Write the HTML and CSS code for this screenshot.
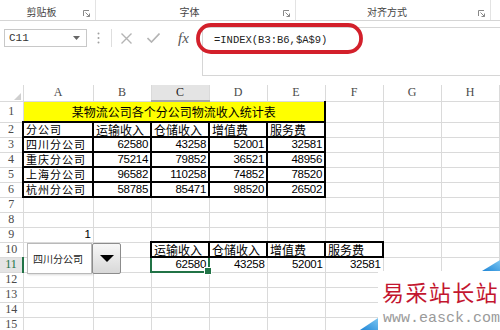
FILE: index.html
```html
<!DOCTYPE html>
<html>
  <head>
    <meta charset="utf-8">
    <title>INDEX 函数 - 物流收入统计</title>
    <link rel="stylesheet" href="styles.css">
  </head>
  <body>
    <!-- 功能区分组 -->
    <div class="ribbon">
      <div class="group g-clip"><span class="label">剪贴板</span><svg class="launcher" width="7" height="7" viewBox="0 0 7 7"><path d="M0.5 6V0.5H6M2.5 2.5L6.5 6.5M6.5 3.5V6.5H3.5" fill="none" stroke="#888" stroke-width="1"/></svg></div>
      <div class="group g-font"><span class="label">字体</span><svg class="launcher" width="7" height="7" viewBox="0 0 7 7"><path d="M0.5 6V0.5H6M2.5 2.5L6.5 6.5M6.5 3.5V6.5H3.5" fill="none" stroke="#888" stroke-width="1"/></svg></div>
      <div class="group g-align"><span class="label">对齐方式</span><svg class="launcher" width="7" height="7" viewBox="0 0 7 7"><path d="M0.5 6V0.5H6M2.5 2.5L6.5 6.5M6.5 3.5V6.5H3.5" fill="none" stroke="#888" stroke-width="1"/></svg></div>
    </div>

    <!-- 编辑栏 -->
    <div class="formula-bar">
      <div class="name-box"><span>C11</span><svg width="7" height="4" viewBox="0 0 7 4"><path d="M0 0H7L3.5 4Z" fill="#666"/></svg></div>
      <div class="grip"><svg width="3" height="12" viewBox="0 0 3 12"><circle cx="1.5" cy="1.5" r="1" fill="#a0a0a0"/><circle cx="1.5" cy="6" r="1" fill="#a0a0a0"/><circle cx="1.5" cy="10.5" r="1" fill="#a0a0a0"/></svg></div>
      <div class="fx-buttons">
        <svg class="btn-cancel" width="11" height="11" viewBox="0 0 11 11"><path d="M0.5 0.5L10.5 10.5M10.5 0.5L0.5 10.5" stroke="#b4b4b4" stroke-width="1.4"/></svg>
        <svg class="btn-enter" width="13" height="10" viewBox="0 0 13 10"><path d="M0.5 5L4.5 9L12.5 0.5" fill="none" stroke="#b4b4b4" stroke-width="1.6"/></svg>
        <span class="fx">fx</span>
      </div>
      <div class="formula-input">=INDEX(B3:B6,$A$9)</div>
      <svg class="mark" width="172" height="36" viewBox="0 0 172 36"><rect x="4" y="4" width="163" height="27" rx="13" fill="none" stroke="#d3202b" stroke-width="3.8"/></svg>
    </div>

    <!-- 工作表 -->
    <div class="sheet">
      <table class="grid">
        <colgroup><col class="w-hd"><col class="w-a"><col class="w-n" span="7"></colgroup>
        <tr class="hd">
          <th class="corner"><svg width="7" height="7" viewBox="0 0 7 7"><path d="M7 0V7H0Z" fill="#cfcfcf"/></svg></th>
          <th>A</th><th>B</th><th class="sel">C</th><th>D</th><th>E</th><th>F</th><th>G</th><th>H</th>
        </tr>
        <tr class="r1"><th>1</th><td colspan="5" class="title">某物流公司各个分公司物流收入统计表</td><td></td><td></td><td></td></tr>
        <tr><th>2</th><td class="b t">分公司</td><td class="b">运输收入</td><td class="b">仓储收入</td><td class="b">增值费</td><td class="b">服务费</td><td></td><td></td><td></td></tr>
        <tr><th>3</th><td class="b t">四川分公司</td><td class="b n">62580</td><td class="b n">43258</td><td class="b n">52001</td><td class="b n">32581</td><td></td><td></td><td></td></tr>
        <tr><th>4</th><td class="b t">重庆分公司</td><td class="b n">75214</td><td class="b n">79852</td><td class="b n">36521</td><td class="b n">48956</td><td></td><td></td><td></td></tr>
        <tr><th>5</th><td class="b t">上海分公司</td><td class="b n">96582</td><td class="b n">110258</td><td class="b n">74852</td><td class="b n">78520</td><td></td><td></td><td></td></tr>
        <tr><th>6</th><td class="b t">杭州分公司</td><td class="b n">58785</td><td class="b n">85471</td><td class="b n">98520</td><td class="b n">26502</td><td></td><td></td><td></td></tr>
        <tr><th>7</th><td></td><td></td><td></td><td></td><td></td><td></td><td></td><td></td></tr>
        <tr><th>8</th><td></td><td></td><td></td><td></td><td></td><td></td><td></td><td></td></tr>
        <tr><th>9</th><td class="n">1</td><td></td><td></td><td></td><td></td><td></td><td></td><td></td></tr>
        <tr><th>10</th><td></td><td></td><td class="b">运输收入</td><td class="b">仓储收入</td><td class="b">增值费</td><td class="b">服务费</td><td></td><td></td></tr>
        <tr><th class="sel-row">11</th><td></td><td></td><td class="n active">62580</td><td class="n">43258</td><td class="n">52001</td><td class="n">32581</td><td></td><td></td></tr>
        <tr><th>12</th><td></td><td></td><td></td><td></td><td></td><td></td><td></td><td></td></tr>
        <tr><th>13</th><td></td><td></td><td></td><td></td><td></td><td></td><td></td><td></td></tr>
        <tr><th>14</th><td></td><td></td><td></td><td></td><td></td><td></td><td></td><td></td></tr>
        <tr><th>15</th><td></td><td></td><td></td><td></td><td></td><td></td><td></td><td></td></tr>
      </table>

      <!-- 组合框控件 -->
      <div class="combo">
        <div class="combo-text">四川分公司</div>
        <div class="combo-btn"><svg width="14" height="7" viewBox="0 0 14 7"><path d="M0 0H14L7 7Z" fill="#000"/></svg></div>
      </div>
    </div>

    <!-- 水印 -->
    <div class="watermark">
      <svg class="wm-deco" width="142" height="74" viewBox="0 0 142 74">
        <defs><linearGradient id="wmBlue" x1="0" y1="1" x2="1" y2="0"><stop offset="0" stop-color="#1f86d6"/><stop offset="1" stop-color="#7cc6f2"/></linearGradient></defs>
        <rect x="20" y="15" width="122" height="59" fill="#fff"/>
        <path d="M124 15L142 4V15Z" fill="url(#wmBlue)"/>
        <path d="M2 74L20 62V74Z" fill="url(#wmBlue)"/>
      </svg>
      <div class="wm-name">易采站长站</div>
      <div class="wm-url">www.easck.com</div>
    </div>
  </body>
</html>
```
FILE: styles.css
```css
body{margin:0;padding:0;background:#fff;font-family:"Noto Sans CJK SC",sans-serif;color:#000;overflow:hidden}
*{box-sizing:border-box}

/* ribbon */
.ribbon{display:flex;height:21px;border-bottom:1px solid #d5d5d5;font-size:10px;color:#444}
.group{display:flex;align-items:center;height:20px;border-right:1px solid #e3e3e3;padding-top:3px}
.group .label{flex:1;text-align:center}
.launcher{margin:4px 5px 0 0}
.g-clip{width:96px}
.g-font{width:200px}
.g-align{width:195px}

/* formula bar */
.formula-bar{position:relative;display:flex;align-items:flex-start;height:64px;padding-left:4px}
.name-box{display:flex;align-items:center;justify-content:space-between;width:83px;height:18px;margin-top:8px;padding:0 6px 0 4px;border:1px solid #c8c8c8;font:11px "Liberation Mono",monospace;color:#333}
.grip{width:14px;height:18px;margin:8px 0 0 4px;display:flex;align-items:center;justify-content:center}
.fx-buttons{display:flex;align-items:center;width:86px;height:18px;margin:8px 0 0 6px;padding-left:9px;border-left:1px solid #dedede}
.btn-enter{margin-left:15px}
.fx{margin-left:18px;font:italic 15px "Liberation Serif",serif;color:#555;line-height:18px}
.formula-input{flex:1;height:49px;margin:6px -1px 0 5px;padding:6px 0 0 11px;border:1px solid #d6d6d6;font:10.5px/12px "Liberation Mono",monospace;color:#222;white-space:nowrap}
.mark{position:absolute;left:194px;top:0;pointer-events:none}

/* sheet */
.sheet{position:relative}
.grid{border-collapse:collapse;table-layout:fixed;width:499px;font-size:12px}
.w-hd{width:23px}
.w-a{width:70px}
.w-n{width:58px}
.grid tr{height:15px}
.grid .hd{height:16px}
.grid .r1{height:21px}
.grid td,.grid th{padding:0 2px;border:1px solid #dadada;line-height:13px;white-space:nowrap;font-weight:normal}
.grid th{font:12px/13px "Liberation Serif",serif;color:#4a4a4a;text-align:center;padding:0}
.grid th:first-child{border-left:0}
.grid .hd th{border-top:0}
.grid .corner{text-align:right;vertical-align:bottom;padding:0 2px 1px 0}
.grid .corner svg{display:block;margin-left:auto}
.grid .sel{background:#e4e4e4;border-bottom:2px solid #a6a6a6;color:#222}
.grid .sel-row{background:#e4e4e4;border-right:2px solid #217346;color:#217346}
.title{background:#ffff00;text-align:center;border-right:2px solid #000 !important}
.b{border:2px solid #000 !important}
.t{font-size:11px;letter-spacing:1px}
.n{text-align:right;font-family:"Liberation Sans",sans-serif;font-size:11.5px;letter-spacing:-0.3px}
.active{position:relative;border:2px solid #217346 !important}
.active::after{content:"";position:absolute;right:-4px;bottom:-4px;width:6px;height:6px;background:#217346;border:1px solid #fff}

/* combo box control */
.combo{position:absolute;left:27px;top:158px;display:flex;height:31px}
.combo-text{display:flex;align-items:center;width:65px;padding-left:5px;border:1px solid #b9b9b9;background:#fff;font-size:10px;color:#222;box-shadow:1px 1px 2px rgba(0,0,0,0.15)}
.combo-btn{display:flex;align-items:center;justify-content:center;width:29px;border:1px solid #8c8c8c;border-radius:2px;background:linear-gradient(#f7f7f7,#d8d8d8)}

/* watermark */
.watermark{position:absolute;left:358px;top:256px;width:142px;height:74px}
.wm-deco{position:absolute;left:0;top:0}
.wm-name{position:relative;margin:23px 0 0 24px;font-size:22px;line-height:24px;letter-spacing:1.4px;color:#c3162f;white-space:nowrap}
.wm-url{position:relative;margin:7px 0 0 25px;font:15px/18px "Liberation Mono",monospace;color:#9a9a9a;white-space:nowrap}
```
